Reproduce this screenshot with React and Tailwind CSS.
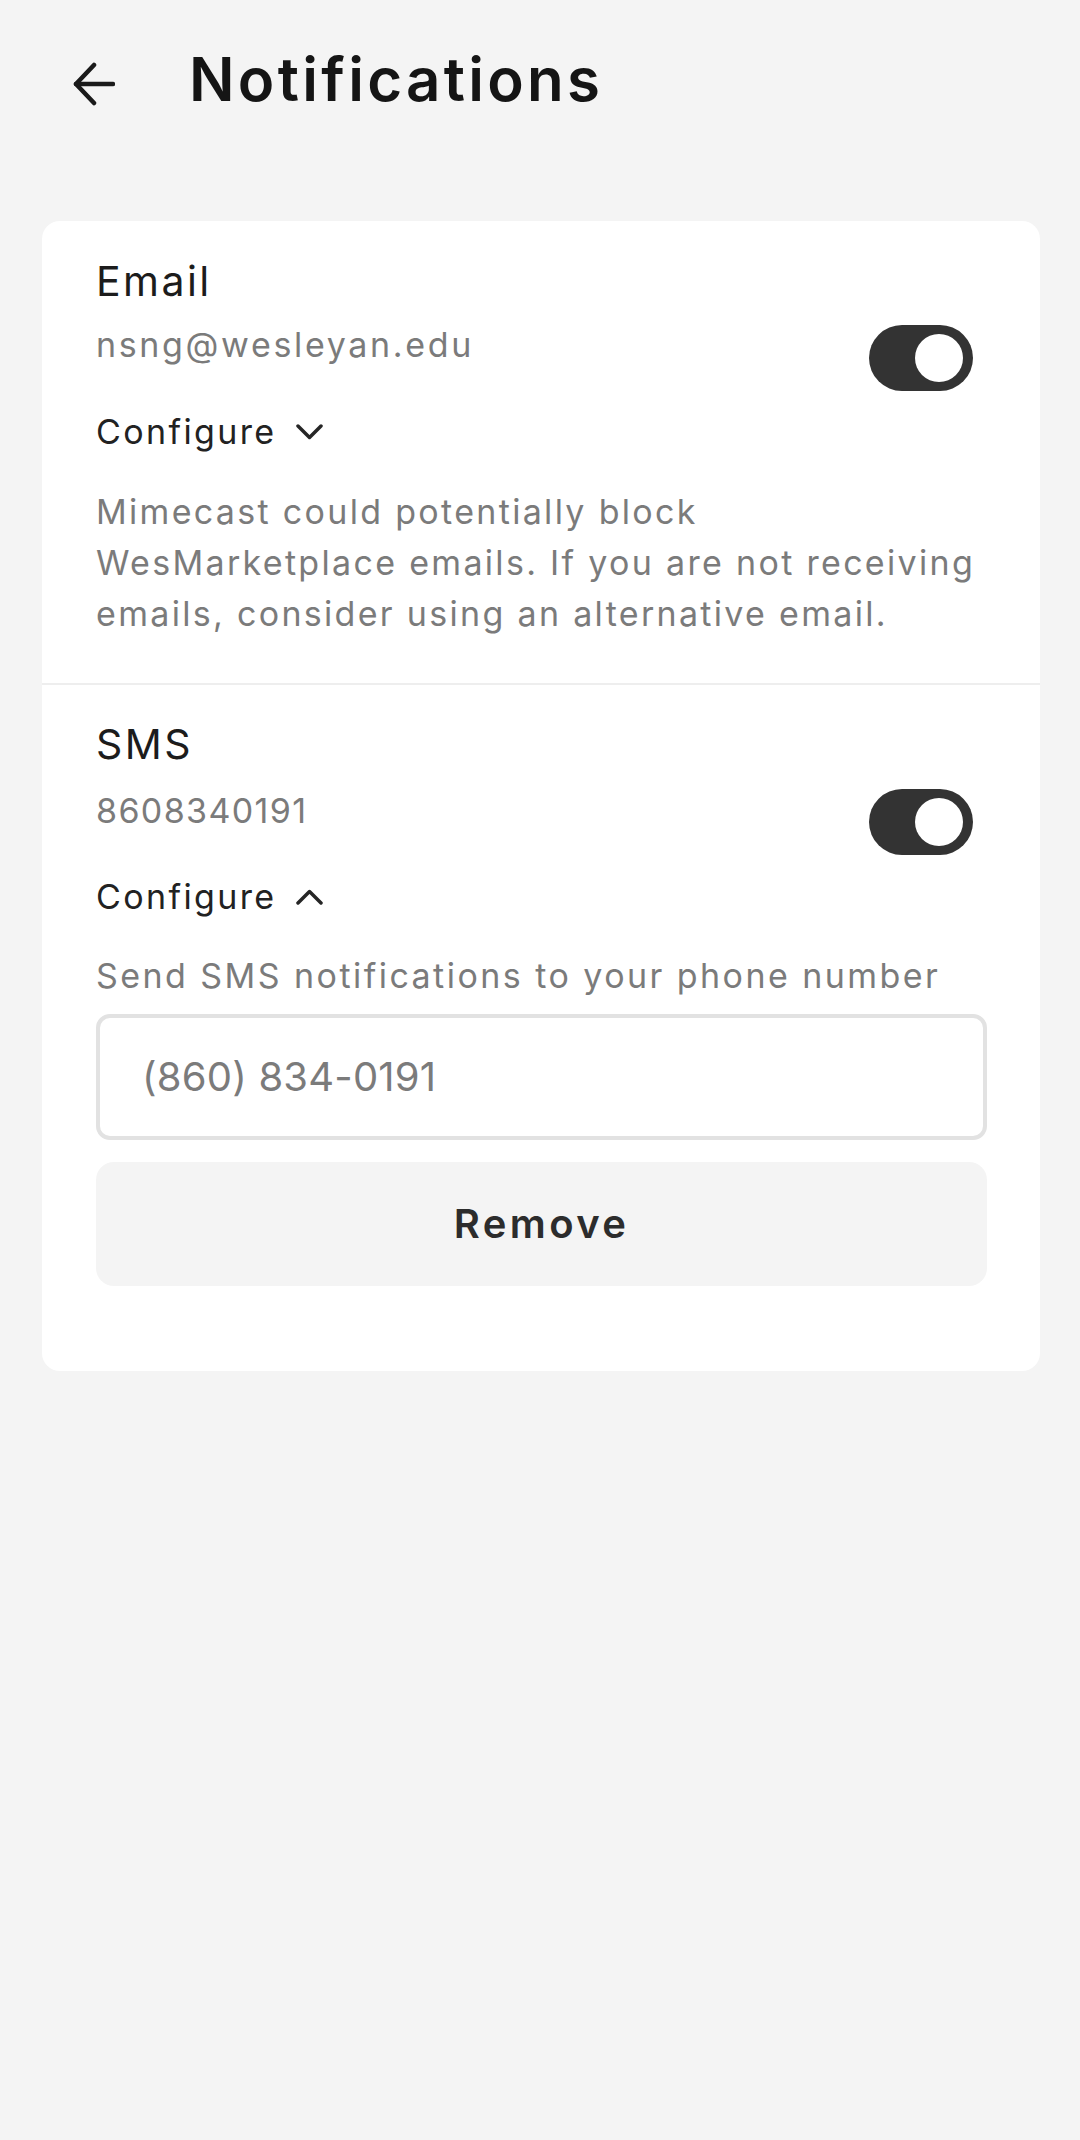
function Toggle({ top }) {
  return (
    <div className={top}>
      <div className="w-[104px] h-[66px] rounded-full bg-[#333333] flex items-center justify-end pr-[10px] shrink-0">
        <div className="w-[48px] h-[48px] rounded-full bg-white" />
      </div>
    </div>
  );
}

function Chevron({ up }) {
  return (
    <svg width="27" height="16" viewBox="0 0 27 16" fill="none" stroke="#262626" strokeWidth="3.5" strokeLinecap="round" strokeLinejoin="round">
      {up ? <path d="M2 14 L13.5 2.5 L25 14" /> : <path d="M2 2 L13.5 13.5 L25 2" />}
    </svg>
  );
}

function Section({ label, value, valueTrack, open, valueTop, toggleTop, configTop, children }) {
  return (
    <div className="pl-[54px] pr-[53px]">
      <div className="flex items-start justify-between pr-[14px]">
        <div>
          <div className="text-[41px] leading-[48px] tracking-[0.06em] text-[#1c1c1c]">{label}</div>
          <div className={`${valueTop} ${valueTrack} text-[34px] leading-[40px] text-[#7b7b7b]`}>{value}</div>
        </div>
        <Toggle top={toggleTop} />
      </div>
      <div className={`${configTop} flex items-center gap-[19px] text-[34px] leading-[40px] tracking-[0.07em] text-[#222222]`}>
        <span>Configure</span>
        <Chevron up={open} />
      </div>
      {children}
    </div>
  );
}

export default function App() {
  return (
    <div
      className="min-h-[2140px] bg-[#f4f4f4]"
      style={{ fontFamily: "Inter, 'Noto Sans', sans-serif" }}
    >
      <div className="h-[168px] flex items-center pl-[73px]">
        <svg width="42" height="44" viewBox="0 0 42 44" fill="none" stroke="#1a1a1a" strokeWidth="4.5" strokeLinecap="round" strokeLinejoin="round">
          <path d="M21 3 L3 22 L21 41" />
          <path d="M3 22 H40" />
        </svg>
        <h1 className="ml-[74px] mb-[11px] text-[60px] font-semibold tracking-[0.055em] text-[#151515] leading-none">
          Notifications
        </h1>
      </div>

      <div className="ml-[42px] mr-[40px] mt-[53px] bg-white rounded-[18px]">
        <div className="pt-[36px] pb-[44px] border-b-2 border-[#eeeeee]">
          <Section
            label="Email"
            value="nsng@wesleyan.edu"
            valueTrack="tracking-[0.078em]"
            open={false}
            valueTop="mt-[20px]"
            toggleTop="mt-[68px]"
            configTop="mt-[21px]"
          >
            <p className="mt-[34px] text-[34px] leading-[51px] tracking-[0.068em] text-[#7b7b7b]">
              Mimecast could potentially block WesMarketplace emails. If you are not receiving emails, consider using an alternative email.
            </p>
          </Section>
        </div>

        <div className="pt-[35px] pb-[85px]">
          <Section
            label="SMS"
            value="8608340191"
            valueTrack="tracking-[0.04em]"
            open={true}
            valueTop="mt-[23px]"
            toggleTop="mt-[69px]"
            configTop="mt-[22px]"
          >
            <p className="mt-[34px] text-[34px] leading-[50px] tracking-[0.072em] text-[#7b7b7b]">
              Send SMS notifications to your phone number
            </p>
            <div className="mt-[13px] h-[126px] rounded-[14px] border-4 border-[#e2e2e2] flex items-center px-[42px]">
              <span className="text-[40px] tracking-[0.005em] text-[#7b7b7b]">(860) 834-0191</span>
            </div>
            <button className="mt-[22px] w-full h-[124px] rounded-[18px] bg-[#f4f4f4] text-[40px] font-semibold tracking-[0.085em] text-[#2c2c2c]">
              Remove
            </button>
          </Section>
        </div>
      </div>
    </div>
  );
}
